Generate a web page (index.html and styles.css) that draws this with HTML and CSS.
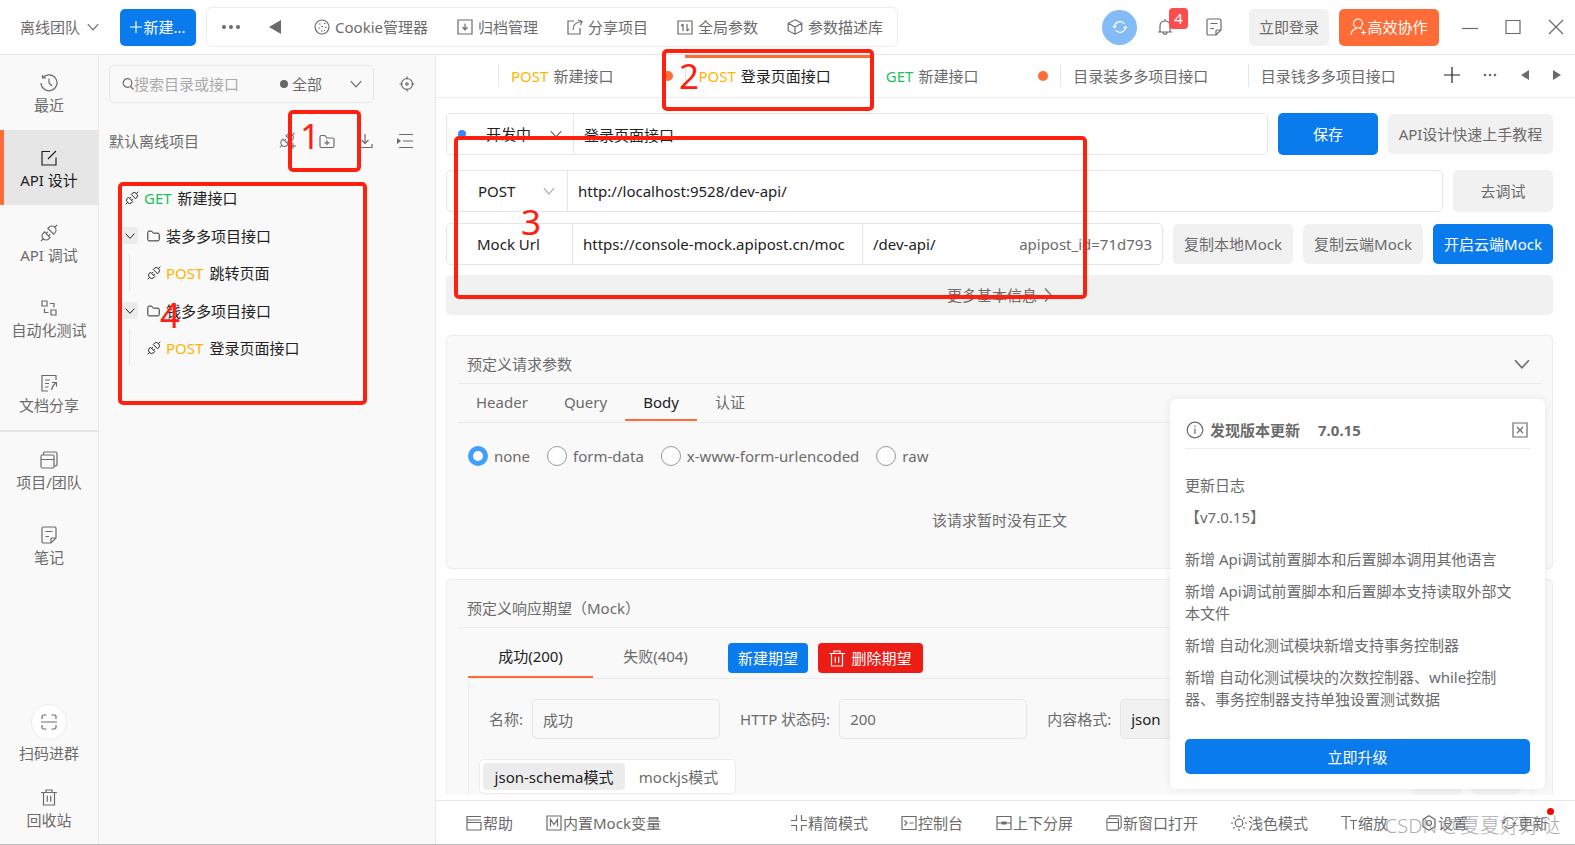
FILE: index.html
```html
<!DOCTYPE html>
<html lang="zh-CN">
<head>
<meta charset="utf-8">
<title>API 设计</title>
<link rel="stylesheet" href="styles.css">
</head>
<body>
<svg class="sprite" aria-hidden="true">
  <symbol id="i-down" viewBox="0 0 12 12"><path d="M.8 3.2 6 8.8l5.2-5.6"/></symbol>
  <symbol id="i-right" viewBox="0 0 8 16"><path d="M1 1.500 7 8l-6 6.500"/></symbol>
  <symbol id="i-link" viewBox="0 0 18 18"><path transform="rotate(-45 9 9)" d="M-2.500 9H.8M6.500 5H4.800a4 4 0 0 0 0 8H6.500zM6.500 7.300H9M6.500 10.700H9M11.500 5h1.700a4 4 0 0 1 0 8h-1.700zM17.200 9h3.300"/></symbol>
  <symbol id="i-folder" viewBox="0 0 16 14"><path d="M1 2.500C1 1.700 1.500 1 2.300 1h3.500l2 2.500h5.900c.8 0 1.300.6 1.300 1.300v6.700c0 .9-.5 1.500-1.300 1.500H2.300C1.500 13 1 12.400 1 11.500z"/></symbol>
  <symbol id="i-note" viewBox="0 0 16 18"><path d="M10 17H2.500c-.8 0-1.500-.5-1.500-1.300V2.300C1 1.500 1.700 1 2.500 1h11c.8 0 1.500.5 1.500 1.300V12zM10 17v-4c0-.7.300-1 1-1h4M4.500 5.500h7M4.500 10.500h3.500"/></symbol>
  <symbol id="i-windows" viewBox="0 0 18 18"><path d="M1 5.500C1 4.700 1.500 4 2.300 4h10.400c.8 0 1.300.7 1.300 1.500v10c0 .8-.5 1.500-1.300 1.500H2.300C1.500 17 1 16.300 1 15.500zM1 8.500h13M3.500 3.500V2.300C3.500 1.500 4 1 4.800 1h10.700c.8 0 1.500.7 1.500 1.500v11c0 .8-.7 1.300-1.500 1.300H14.500"/></symbol>
  <symbol id="i-trash" viewBox="0 0 16 17"><path d="M0 3.500h16M5 3V1h6v2M2.500 3.500V16h11V3.500M6.300 6.800v6M9.700 6.800v6"/></symbol>
  <symbol id="i-target" viewBox="0 0 16 16"><circle cx="8" cy="8" r="5.500"/><circle cx="8" cy="8" r="1.200"/><path d="M8 .5v3M8 12.500v3M.5 8h3M12.500 8h3"/></symbol>
  <symbol id="i-update" viewBox="0 0 16 16"><path d="M2.500 8A5.500 5.500 0 0 1 12.500 5M13.500 8A5.500 5.500 0 0 1 3.500 11M1 7l1.500 1.500L4.300 7M11.700 9l1.800-1.500L15 9"/></symbol>
</svg>

<div class="app">
  <header class="topbar">
    <button class="team">离线团队<svg class="ic s12"><use href="#i-down"/></svg></button>
    <button class="btn primary new"><svg class="ic s12" viewBox="0 0 12 12"><path d="M6 0v12M0 6h12"/></svg>新建...</button>
    <nav class="tools">
      <button class="tool dots" aria-label="更多"><svg class="solid" width="18" height="4"><circle cx="2" cy="2" r="2"/><circle cx="9" cy="2" r="2"/><circle cx="16" cy="2" r="2"/></svg></button>
      <button class="tool back" aria-label="返回"><svg class="solid" width="12" height="14"><path d="M12 0v14L0 7z"/></svg></button>
      <button class="tool"><svg class="ic s16" viewBox="0 0 16 16"><circle cx="8" cy="8" r="7"/><path d="M5 5h1.500M10 4.500h1.500M4.500 9H6M7.500 7.500H9M11 8.500h1.500M7 12h1.500M10 11.500h1"/></svg>Cookie管理器</button>
      <button class="tool"><svg class="ic s16" viewBox="0 0 16 16"><path d="M1 1h14v14H1zM8 4.500v6M5.500 8 8 10.800 10.500 8"/></svg>归档管理</button>
      <button class="tool"><svg class="ic s16" viewBox="0 0 16 16"><path d="M7 2H1v13h12V9M6 11c0-5 3-8 8.500-8.500M11 1l4 1.300L13.500 6"/></svg>分享项目</button>
      <button class="tool"><svg class="ic s16" viewBox="0 0 16 16"><path d="M1 2h14v13H1zM6 5v7M4 7l2-2M10 5v7M12 10l-2 2"/></svg>全局参数</button>
      <button class="tool"><svg class="ic s16" viewBox="0 0 16 16"><path d="m8 .8 6.800 3.500v7.400L8 15.200 1.200 11.700V4.300zM1.200 4.300 8 8l6.800-3.700M8 8v7"/></svg>参数描述库</button>
    </nav>
    <div class="account">
      <button class="sync" aria-label="同步"><svg class="ic s16"><use href="#i-update"/></svg></button>
      <button class="bell" aria-label="通知"><svg class="ic" width="16" height="18" viewBox="0 0 16 18"><path d="M1 14h14M3 14V8c0-3 2-5 5-5s5 2 5 5v6M8 1v2M6 14c0 3 4 3 4 0"/></svg><span class="badge">4</span></button>
      <button class="plain" aria-label="笔记"><svg class="ic" width="16" height="18"><use href="#i-note"/></svg></button>
      <button class="btn grey login">立即登录</button>
      <button class="btn orange"><svg class="ic" width="17" height="18" viewBox="0 0 17 18"><circle cx="8" cy="5.500" r="4.500"/><path d="M1 17c0-4 3-6.500 6-6.500M9 10c1.500 0 2.500.5 3 1M13.500 12v5M11 14.500h5"/></svg>高效协作</button>
    </div>
    <div class="winctl">
      <button class="plain" aria-label="最小化"><svg class="ic" width="16" height="16"><path d="M0 9.500h16"/></svg></button>
      <button class="plain" aria-label="最大化"><svg class="ic" width="16" height="16"><path d="M1 1.500h14v13H1z"/></svg></button>
      <button class="plain" aria-label="关闭"><svg class="ic" width="16" height="16"><path d="m1 1 14 14M15 1 1 15"/></svg></button>
    </div>
  </header>

  <aside class="rail">
    <button class="nav"><svg class="ic s18" viewBox="0 0 18 18"><path d="M3 3.500A8 8 0 1 1 1 9M2.500 1v3h3.500M9 4.500V9l3 3"/></svg>最近</button>
    <button class="nav active"><svg class="ic s18" viewBox="0 0 18 18"><path d="M10 2.500H2v13.500h14V8.500M8 10l8-8"/></svg>API 设计</button>
    <button class="nav"><svg class="ic s18"><use href="#i-link"/></svg>API 调试</button>
    <button class="nav"><svg class="ic s18" viewBox="0 0 18 18"><path d="M2 2h5v5H2zM11 11h5v5h-5zM10 4.500h4V8.500M4.500 9.500v4H8.500"/></svg>自动化测试</button>
    <button class="nav"><svg class="ic s18" viewBox="0 0 18 18"><path d="M8 17H2V1.500h14V6M5 6h5M5 9.500h4M5 13h3.500M11.500 16c.5-3 1.500-5 4-7M12 8.500h4.500v4"/></svg>文档分享</button>
    <hr>
    <button class="nav"><svg class="ic s18"><use href="#i-windows"/></svg>项目/团队</button>
    <button class="nav"><svg class="ic s18"><use href="#i-note"/></svg>笔记</button>
    <div class="rail-end">
      <button class="nav scan"><span class="ring"><svg class="ic s16" viewBox="0 0 16 16"><path d="M1 5V2.500C1 1.500 1.500 1 2.500 1H5.500M10.500 1h3c1 0 1.500.5 1.500 1.500V5M1 11v2.500c0 1 .5 1.500 1.500 1.500h3M10.500 15h3c1 0 1.500-.5 1.500-1.500V11M0 8h16"/></svg></span>扫码进群</button>
      <button class="nav bin"><svg class="ic" width="16" height="17"><use href="#i-trash"/></svg>回收站</button>
    </div>
  </aside>

  <section class="panel">
    <div class="search-row">
      <div class="search">
        <svg class="ic s12" viewBox="0 0 12 12"><circle cx="5.500" cy="5" r="4.300"/><path d="m8.500 8.500 3 3"/></svg>
        <input type="text" placeholder="搜索目录或接口" aria-label="搜索目录或接口">
        <i class="dot dark"></i>
        <select aria-label="状态筛选"><option>全部</option></select>
        <svg class="ic s12"><use href="#i-down"/></svg>
      </div>
      <button class="plain" aria-label="定位"><svg class="ic s16"><use href="#i-target"/></svg></button>
    </div>
    <div class="project">
      <span class="project-name">默认离线项目</span>
      <button class="plain" aria-label="新建接口"><svg class="ic s18" viewBox="0 0 20 20"><use href="#i-link" width="18" height="18"/><path d="M15.500 12v7M12 15.500h7"/></svg></button>
      <button class="plain" aria-label="新建目录"><svg class="ic" width="16" height="15" viewBox="0 0 16 14"><use href="#i-folder"/><path d="M8 5.800v5M5.500 8.300h5"/></svg></button>
      <button class="plain" aria-label="导入"><svg class="ic s16" viewBox="0 0 16 16"><path d="M8 1v9.500M4.500 7 8 10.500 11.500 7M1 11v3.500h14V11"/></svg></button>
      <button class="plain" aria-label="展开"><svg class="ic s16" viewBox="0 0 16 16"><path d="M2 1.500h14M6 8h10M2 14.500h14"/><path class="fill" d="m0 5 4 3-4 3z"/></svg></button>
    </div>
    <ul class="tree">
      <li class="leaf"><svg class="ic s14"><use href="#i-link"/></svg><b class="get">GET</b>新建接口</li>
      <li class="group">
        <div class="branch"><button class="fold" aria-label="折叠"><svg class="ic s10"><use href="#i-down"/></svg></button><svg class="ic" width="13" height="12"><use href="#i-folder"/></svg>装多多项目接口</div>
        <ul><li class="leaf"><svg class="ic s14"><use href="#i-link"/></svg><b class="post">POST</b>跳转页面</li></ul>
      </li>
      <li class="group">
        <div class="branch"><button class="fold" aria-label="折叠"><svg class="ic s10"><use href="#i-down"/></svg></button><svg class="ic" width="13" height="12"><use href="#i-folder"/></svg>钱多多项目接口</div>
        <ul><li class="leaf"><svg class="ic s14"><use href="#i-link"/></svg><b class="post">POST</b>登录页面接口</li></ul>
      </li>
    </ul>
  </section>

  <main class="work">
    <nav class="tabs">
      <button class="tab"><b class="post">POST</b>新建接口<i class="dot orange-dot"></i></button>
      <button class="tab current"><b class="post">POST</b>登录页面接口</button>
      <button class="tab no-line"><b class="get">GET</b>新建接口<i class="dot orange-dot"></i></button>
      <button class="tab">目录装多多项目接口</button>
      <button class="tab">目录钱多多项目接口</button>
      <div class="tab-ctl">
        <button class="plain" aria-label="新标签"><svg class="ic black" width="18" height="18"><path d="M9 1v16M1 9h16"/></svg></button>
        <button class="plain" aria-label="更多"><svg class="solid" width="14" height="4"><circle cx="2" cy="2" r="1.300"/><circle cx="7" cy="2" r="1.300"/><circle cx="12" cy="2" r="1.300"/></svg></button>
        <button class="plain" aria-label="向左"><svg class="solid" width="10" height="12"><path d="M9 1v10L1 6z"/></svg></button>
        <button class="plain" aria-label="向右"><svg class="solid" width="10" height="12"><path d="M1 1v10l8-5z"/></svg></button>
      </div>
    </nav>

    <div class="content">
      <div class="row">
        <div class="combo">
          <div class="cell status"><i class="dot blue-dot"></i><select aria-label="状态"><option>开发中</option></select><svg class="ic s12"><use href="#i-down"/></svg></div>
          <input class="grow" type="text" value="登录页面接口" aria-label="接口名称">
        </div>
        <button class="btn primary w100 tall">保存</button>
        <button class="btn grey guide">API设计快速上手教程</button>
      </div>
      <div class="row">
        <div class="combo">
          <div class="cell method"><select aria-label="请求方法"><option>POST</option></select><svg class="ic s12 pale"><use href="#i-down"/></svg></div>
          <input class="grow" type="text" value="http://localhost:9528/dev-api/" aria-label="接口地址">
        </div>
        <button class="btn grey w100 tall">去调试</button>
      </div>
      <div class="row mock">
        <div class="combo">
          <div class="cell mock-label">Mock Url</div>
          <input class="mock-host" type="text" value="https://console-mock.apipost.cn/moc" aria-label="Mock 地址">
          <input class="grow mock-path" type="text" value="/dev-api/" aria-label="Mock 路径">
          <span class="mock-id">apipost_id=71d793</span>
        </div>
        <button class="btn grey w120">复制本地Mock</button>
        <button class="btn grey w120">复制云端Mock</button>
        <button class="btn primary w120">开启云端Mock</button>
      </div>
      <button class="btn grey more">更多基本信息<svg class="ic" width="8" height="16"><use href="#i-right"/></svg></button>

      <section class="card request">
        <h2>预定义请求参数<svg class="ic s16"><use href="#i-down"/></svg></h2>
        <div class="subtabs">
          <button>Header</button><button>Query</button><button class="on">Body</button><button>认证</button>
        </div>
        <div class="radios">
          <label><input type="radio" name="body" checked>none</label>
          <label><input type="radio" name="body">form-data</label>
          <label><input type="radio" name="body">x-www-form-urlencoded</label>
          <label><input type="radio" name="body">raw</label>
        </div>
        <p class="empty">该请求暂时没有正文</p>
      </section>

      <section class="card response">
        <h2>预定义响应期望（Mock）</h2>
        <div class="cases">
          <button class="case on">成功(200)</button>
          <button class="case">失败(404)</button>
          <button class="btn primary small add">新建期望</button>
          <button class="btn red small"><svg class="ic" width="16" height="17"><use href="#i-trash"/></svg>删除期望</button>
        </div>
        <div class="case-body">
          <div class="fields">
            <label for="f-name">名称:</label><input id="f-name" type="text" value="成功">
            <label for="f-code">HTTP 状态码:</label><input id="f-code" type="text" value="200">
            <label for="f-type">内容格式:</label><select id="f-type"><option>json</option></select>
          </div>
          <div class="modes">
            <div class="seg"><button class="on">json-schema模式</button><button>mockjs模式</button></div>
            <i class="stub"></i><i class="stub"></i>
          </div>
        </div>
      </section>
    </div>

    <footer class="status-bar">
      <button><svg class="ic s16" viewBox="0 0 16 16"><path d="M1 3V1.500h14M1 5h14M1 7.500V15h14V7.500zM1 3v5"/></svg>帮助</button>
      <button class="vars"><svg class="ic s16" viewBox="0 0 16 16"><path d="M1 1h14v14H1zM4.500 11.500v-7L8 9.500l3.500-5v7"/></svg>内置Mock变量</button>
      <button class="push"><svg class="ic s16" viewBox="0 0 16 16"><path d="M5.500 0v5.500H0M10.500 0v5.500H16M5.500 16v-5.500H0M10.500 16v-5.500H16"/></svg>精简模式</button>
      <button><svg class="ic s16" viewBox="0 0 16 16"><path d="M1 1.500h14v13H1zM3.500 5.500 6 8l-2.500 2.500M8.500 8h4"/></svg>控制台</button>
      <button><svg class="ic s16" viewBox="0 0 16 16"><path d="M1 1.500h14v13H1zM1 8h14"/><path class="fill" d="M5.500 6.500h5v3h-5z"/></svg>上下分屏</button>
      <button><svg class="ic s16"><use href="#i-windows"/></svg>新窗口打开</button>
      <button><svg class="ic s16" viewBox="0 0 16 16"><circle cx="8" cy="8" r="3.800"/><path d="M8 0v2M8 14v2M0 8h2M14 8h2M2.300 2.300l1.500 1.500M12.200 12.200l1.500 1.500M2.300 13.700l1.500-1.500M12.200 3.800l1.500-1.500"/></svg>浅色模式</button>
      <button><svg class="ic s16" viewBox="0 0 16 16"><path d="M0 1.500h10M5 1.500V14.500M9 5.500h7M12.500 5.500v9"/></svg>缩放</button>
      <button><svg class="ic s16" viewBox="0 0 16 16"><path d="m8 .8 6 3.600v7.200l-6 3.600-6-3.600V4.400z"/><circle cx="8" cy="8" r="2.500"/></svg>设置</button>
      <button class="upd"><svg class="ic s16"><use href="#i-update"/></svg>更新<i class="alert"></i></button>
    </footer>
  </main>
</div>

<aside class="popover">
  <h3><svg class="ic s18" viewBox="0 0 18 18"><circle cx="9" cy="9" r="7.800"/><path d="M9 7.500v5.500M9 4.500v1.500"/></svg>发现版本更新<span class="ver">7.0.15</span>
    <button class="plain" aria-label="关闭"><svg class="ic s16" viewBox="0 0 16 16"><path d="M1 1h14v14H1zM5 5l6 6M11 5l-6 6"/></svg></button></h3>
  <p class="log-title">更新日志</p>
  <p class="log-ver">【v7.0.15】</p>
  <p>新增 Api调试前置脚本和后置脚本调用其他语言</p>
  <p>新增 Api调试前置脚本和后置脚本支持读取外部文本文件</p>
  <p>新增 自动化测试模块新增支持事务控制器</p>
  <p>新增 自动化测试模块的次数控制器、while控制器、事务控制器支持单独设置测试数据</p>
  <button class="btn primary upgrade">立即升级</button>
</aside>

<div class="mark m1"></div><span class="num n1">1</span>
<div class="mark m2"></div><span class="num n2">2</span>
<div class="mark m3"></div><span class="num n3">3</span>
<div class="mark m4"></div><span class="num n4">4</span>
<span class="watermark">CSDN @夏夏好好哒</span>
</body>
</html>
```

FILE: styles.css
```css
* { box-sizing: border-box; margin: 0; padding: 0; }
body {
  font: 400 15px/22px "Noto Sans", "Noto Sans CJK SC", sans-serif;
  color: #6b6b6b;
  background: #fff;
  overflow: hidden;
}
button, input, select { font: inherit; color: inherit; background: none; border: 0; outline: 0; }
button { display: flex; align-items: center; justify-content: center; white-space: nowrap; flex-shrink: 0; }
select { appearance: none; }
input { min-width: 0; }
ul { list-style: none; }
b { font-weight: 400; }
svg { flex-shrink: 0; display: block; }

.sprite { position: absolute; width: 0; height: 0; }
.ic { fill: none; stroke: currentColor; stroke-width: 1.2; }
.ic .fill { fill: currentColor; stroke: none; }
.solid { fill: currentColor; }
.s10 { width: 10px; height: 10px; }
.s12 { width: 12px; height: 12px; }
.s14 { width: 14px; height: 14px; }
.s16 { width: 16px; height: 16px; }
.s18 { width: 18px; height: 18px; }
.pale { color: #aaa; }
.black { color: #222; }
.get { color: #1dbf60; }
.post { color: #ffb400; }
.dot { width: 8px; height: 8px; border-radius: 50%; flex-shrink: 0; }
.dark { background: #666; }
.orange-dot { width: 10px; height: 10px; background: #ff6c37; }
.blue-dot { background: #3a86ff; }

.btn { height: 40px; border-radius: 5px; }
.primary { background: #097bed; color: #fff; }
.grey { background: #f1f1f1; }
.orange { background: #ff6c37; color: #fff; }
.red { background: #ed1c14; color: #fff; }
.w100 { width: 100px; }
.w120 { width: 120px; }

.app {
  display: grid;
  grid-template: 55px 1fr / 99px 337px 1fr;
  height: 100vh;
  border-bottom: 1px solid #bbb;
}

/* Top bar */
.topbar { grid-column: 1 / -1; display: flex; align-items: center; padding: 0 11px 0 20px; border-bottom: 1px solid #e5e5e5; }
.team { gap: 7px; width: 100px; justify-content: flex-start; }
.new { width: 76px; height: 37px; gap: 1px; }
.tools { display: flex; align-items: center; gap: 29px; height: 40px; margin-left: 10px; padding: 0 14px 0 15px; border: 1px solid #ececec; border-radius: 6px; }
.tool { gap: 5px; }
.back { margin-right: 4px; }
.account { display: flex; align-items: center; margin-left: auto; }
.sync { width: 35px; height: 35px; border-radius: 50%; background: #83bbf7; color: #fff; }
.bell { position: relative; margin: 0 33px 0 20px; }
.badge { position: absolute; left: 12px; top: -10px; width: 19px; height: 21px; border-radius: 4px; background: #ff4d4f; color: #fff; line-height: 21px; }
.login { width: 80px; margin: 0 10px 0 27px; }
.account .btn { height: 37px; }
.orange { width: 100px; }
.winctl { display: flex; align-items: center; gap: 27px; margin-left: 23px; }

/* Left rail */
.rail { display: flex; flex-direction: column; background: #f9f9f9; border-right: 1px solid #e8e8e8; }
.nav { flex-direction: column; height: 75px; gap: 2px; border-left: 4px solid transparent; padding: 4px 4px 0 0; }
.nav.active { background: #e6e6e6; border-color: #ff6c37; color: #222; }
.rail hr { border: 0; border-top: 2px solid #e6e6e6; }
.rail-end { margin-top: auto; padding-bottom: 12px; display: flex; flex-direction: column; }
.ring { width: 36px; height: 36px; border: 1px solid #ececec; border-radius: 50%; background: #fff; display: flex; align-items: center; justify-content: center; }
.scan { height: 60px; gap: 2px; padding-top: 0; }
.bin { height: 68px; gap: 3px; padding-top: 24px; }

/* Project panel */
.panel { background: #f9f9f9; border-right: 1px solid #e8e8e8; padding: 10px 20px 0 10px; }
.search-row { display: flex; align-items: center; justify-content: space-between; }
.search { display: flex; align-items: center; width: 265px; height: 38px; padding: 0 11px 0 12px; border: 1px solid #e6e6e6; border-radius: 5px; }
.search input { flex: 1; }
.search input::placeholder { color: #aaa; opacity: 1; }
.search select { width: 62px; padding-left: 4px; }
.project { display: flex; align-items: center; height: 76px; }
.project-name { width: 170px; }
.project button { margin-right: 22px; }
.project button:last-child { margin: 0 0 0 2px; }
.tree { color: #222; }
.leaf, .branch { display: flex; align-items: center; height: 37px; padding-left: 16px; }
.leaf b { margin: 0 6px 0 5px; }
.group { margin-top: 1px; }
.group ul { margin-left: 20px; border-left: 1px solid #e6e6e6; }
.group .leaf { padding-left: 17px; }
.branch { padding-left: 12px; }
.fold { width: 17px; height: 17px; margin-right: 9px; border-radius: 3px; background: #ececec; }
.branch > svg { margin-right: 6px; }

/* Work area */
.work { display: flex; flex-direction: column; min-width: 0; min-height: 0; }
.tabs { display: flex; height: 43px; padding-left: 62px; border-bottom: 1px solid #ececec; }
.tab { position: relative; flex: 1; justify-content: flex-start; padding: 0 12px 4px 13px; border-top: 3px solid transparent; }
.tab::before { content: ""; position: absolute; left: 0; top: 6px; height: 23px; border-left: 1px solid #e6e6e6; }
.no-line::before { display: none; }
.tab b { margin-right: 5px; }
.tab .dot { margin-left: auto; }
.current { border-top-color: #ff6c37; color: #222; }
.tab-ctl { display: flex; align-items: center; justify-content: space-between; width: 140px; padding: 0 13px 2px 8px; }
.content { flex: 1; min-height: 0; overflow: hidden; padding: 15px 22px 0 10px; margin-bottom: 5px; }
.row { display: flex; align-items: center; gap: 10px; height: 42px; margin-bottom: 15px; }
.row.mock { margin: -4px 0 10px; }
.tall { height: 42px; }
.guide { width: 165px; }
.combo { flex: 1; min-width: 0; display: flex; align-items: center; height: 42px; border: 1px solid #e5e5e5; border-radius: 5px; color: #222; }
.combo input { height: 40px; padding: 0 10px; }
.grow { flex: 1; }
.cell { display: flex; align-items: center; align-self: stretch; border-right: 1px solid #e5e5e5; }
.cell select { flex: 1; }
.status { width: 127px; padding: 0 11px; }
.status select { padding-left: 20px; }
.status svg { color: #666; }
.method { width: 121px; padding: 0 12px 0 31px; }
.mock-label { width: 126px; padding-left: 30px; }
.mock-host { width: 290px; border-right: 1px solid #e5e5e5; }
.mock-id { padding-right: 10px; color: #6b6b6b; }
.more { width: 100%; gap: 7px; margin-bottom: 20px; }
.card { background: #f9f9f9; border: 1px solid #ececec; border-radius: 5px; padding: 0 11px; }
.card h2 { display: flex; justify-content: space-between; align-items: center; height: 48px; padding: 8px 11px 0 9px; font-size: 15px; font-weight: 400; border-bottom: 1px solid #ececec; }
.request { height: 234px; margin-bottom: 10px; }
.subtabs { display: flex; height: 39px; border-bottom: 1px solid #ececec; }
.subtabs button { height: 37px; padding: 0 18px; border-bottom: 2px solid transparent; }
.on { color: #222; }
.subtabs .on { border-color: #ff6c37; }
.radios { display: flex; gap: 17px; padding: 22px 10px 0; }
.radios label { display: flex; align-items: center; gap: 6px; }
.radios input { appearance: none; width: 20px; height: 20px; border: 1px solid #999; border-radius: 50%; background: #fff; }
.radios input:checked { border: 5px solid #409eff; }
.empty { text-align: center; margin-top: 42px; }
.response { height: 300px; padding: 0 20px 0 21px; }
.response h2 { margin: 0 -10px; }
.cases { display: flex; align-items: flex-start; height: 50px; }
.case { width: 125px; height: 50px; padding-top: 8px; border-bottom: 2px solid transparent; }
.case.on { border-color: #ff6c37; }
.small { height: 30px; margin-top: 15px; border-radius: 4px; }
.add { width: 80px; margin: 15px 10px 0; }
.red { width: 105px; gap: 6px; }
.case-body { height: 240px; border: 1px solid #ececec; border-radius: 5px; padding: 20px 10px; }
.fields { display: flex; align-items: center; padding-left: 10px; }
.fields label { margin-right: 9px; white-space: nowrap; }
.fields input, .fields select { flex: 1; height: 40px; margin-right: 20px; padding: 0 10px; border: 1px solid #e5e5e5; border-radius: 5px; }
.fields input { flex: 0 0 188px; }
.fields select { background: #f1f1f1; color: #222; }
.modes { display: flex; align-items: flex-start; margin-top: 20px; }
.seg { display: flex; align-items: center; width: 257px; height: 35px; margin-right: auto; padding: 0 3px; border: 1px solid #ececec; border-radius: 5px; background: #fff; }
.seg button { height: 27px; border-radius: 4px; flex: 1; }
.seg .on { background: #ececec; flex: 0 0 142px; }
.stub { width: 50px; height: 35px; margin-left: 9px; border-radius: 5px; background: #f1f1f1; }

.status-bar { display: flex; align-items: center; gap: 33px; height: 44px; padding: 0 27px 0 30px; border-top: 1px solid #e8e8e8; }
.status-bar button { gap: 1px; }
.push { margin-left: auto; }
.upd { position: relative; }
.alert { position: absolute; right: -6px; top: -4px; width: 7px; height: 7px; border-radius: 50%; background: #f00; }

/* Update notice */
.popover { position: absolute; right: 30px; bottom: 56px; width: 375px; padding: 14px 15px 15px; background: #fff; border-radius: 6px; box-shadow: 0 0 8px rgba(0, 0, 0, .08); }
.popover h3 { display: flex; align-items: center; height: 36px; margin-bottom: 25px; padding: 0 2px 2px 0; font-size: 15px; font-weight: 700; border-bottom: 1px solid #ececec; }
.popover h3 > svg { margin: 0 6px 0 1px; }
.ver { margin: 0 auto 0 18px; }
.popover p { margin: 0 8px 10px 0; }
.popover .log-ver { margin-bottom: 20px; }
.upgrade { width: 100%; height: 35px; margin-top: 29px; }

/* Numbered callouts */
.mark { position: absolute; border: 4px solid #ff2010; border-radius: 5px; pointer-events: none; }
.num { position: absolute; color: #ff2010; font-size: 35px; line-height: 36px; }
.m1 { left: 288px; top: 110px; width: 73px; height: 62px; }
.m2 { left: 662px; top: 49px; width: 212px; height: 62px; }
.m3 { left: 454px; top: 136px; width: 633px; height: 163px; }
.m4 { left: 118px; top: 182px; width: 249px; height: 223px; }
.n1 { left: 300px; top: 118px; }
.n2 { left: 679px; top: 58px; }
.n3 { left: 521px; top: 204px; }
.n4 { left: 160px; top: 297px; }
.watermark { position: absolute; right: 15px; bottom: 4px; font-size: 20px; font-weight: 300; line-height: 30px; color: #999; opacity: .8; }
```
